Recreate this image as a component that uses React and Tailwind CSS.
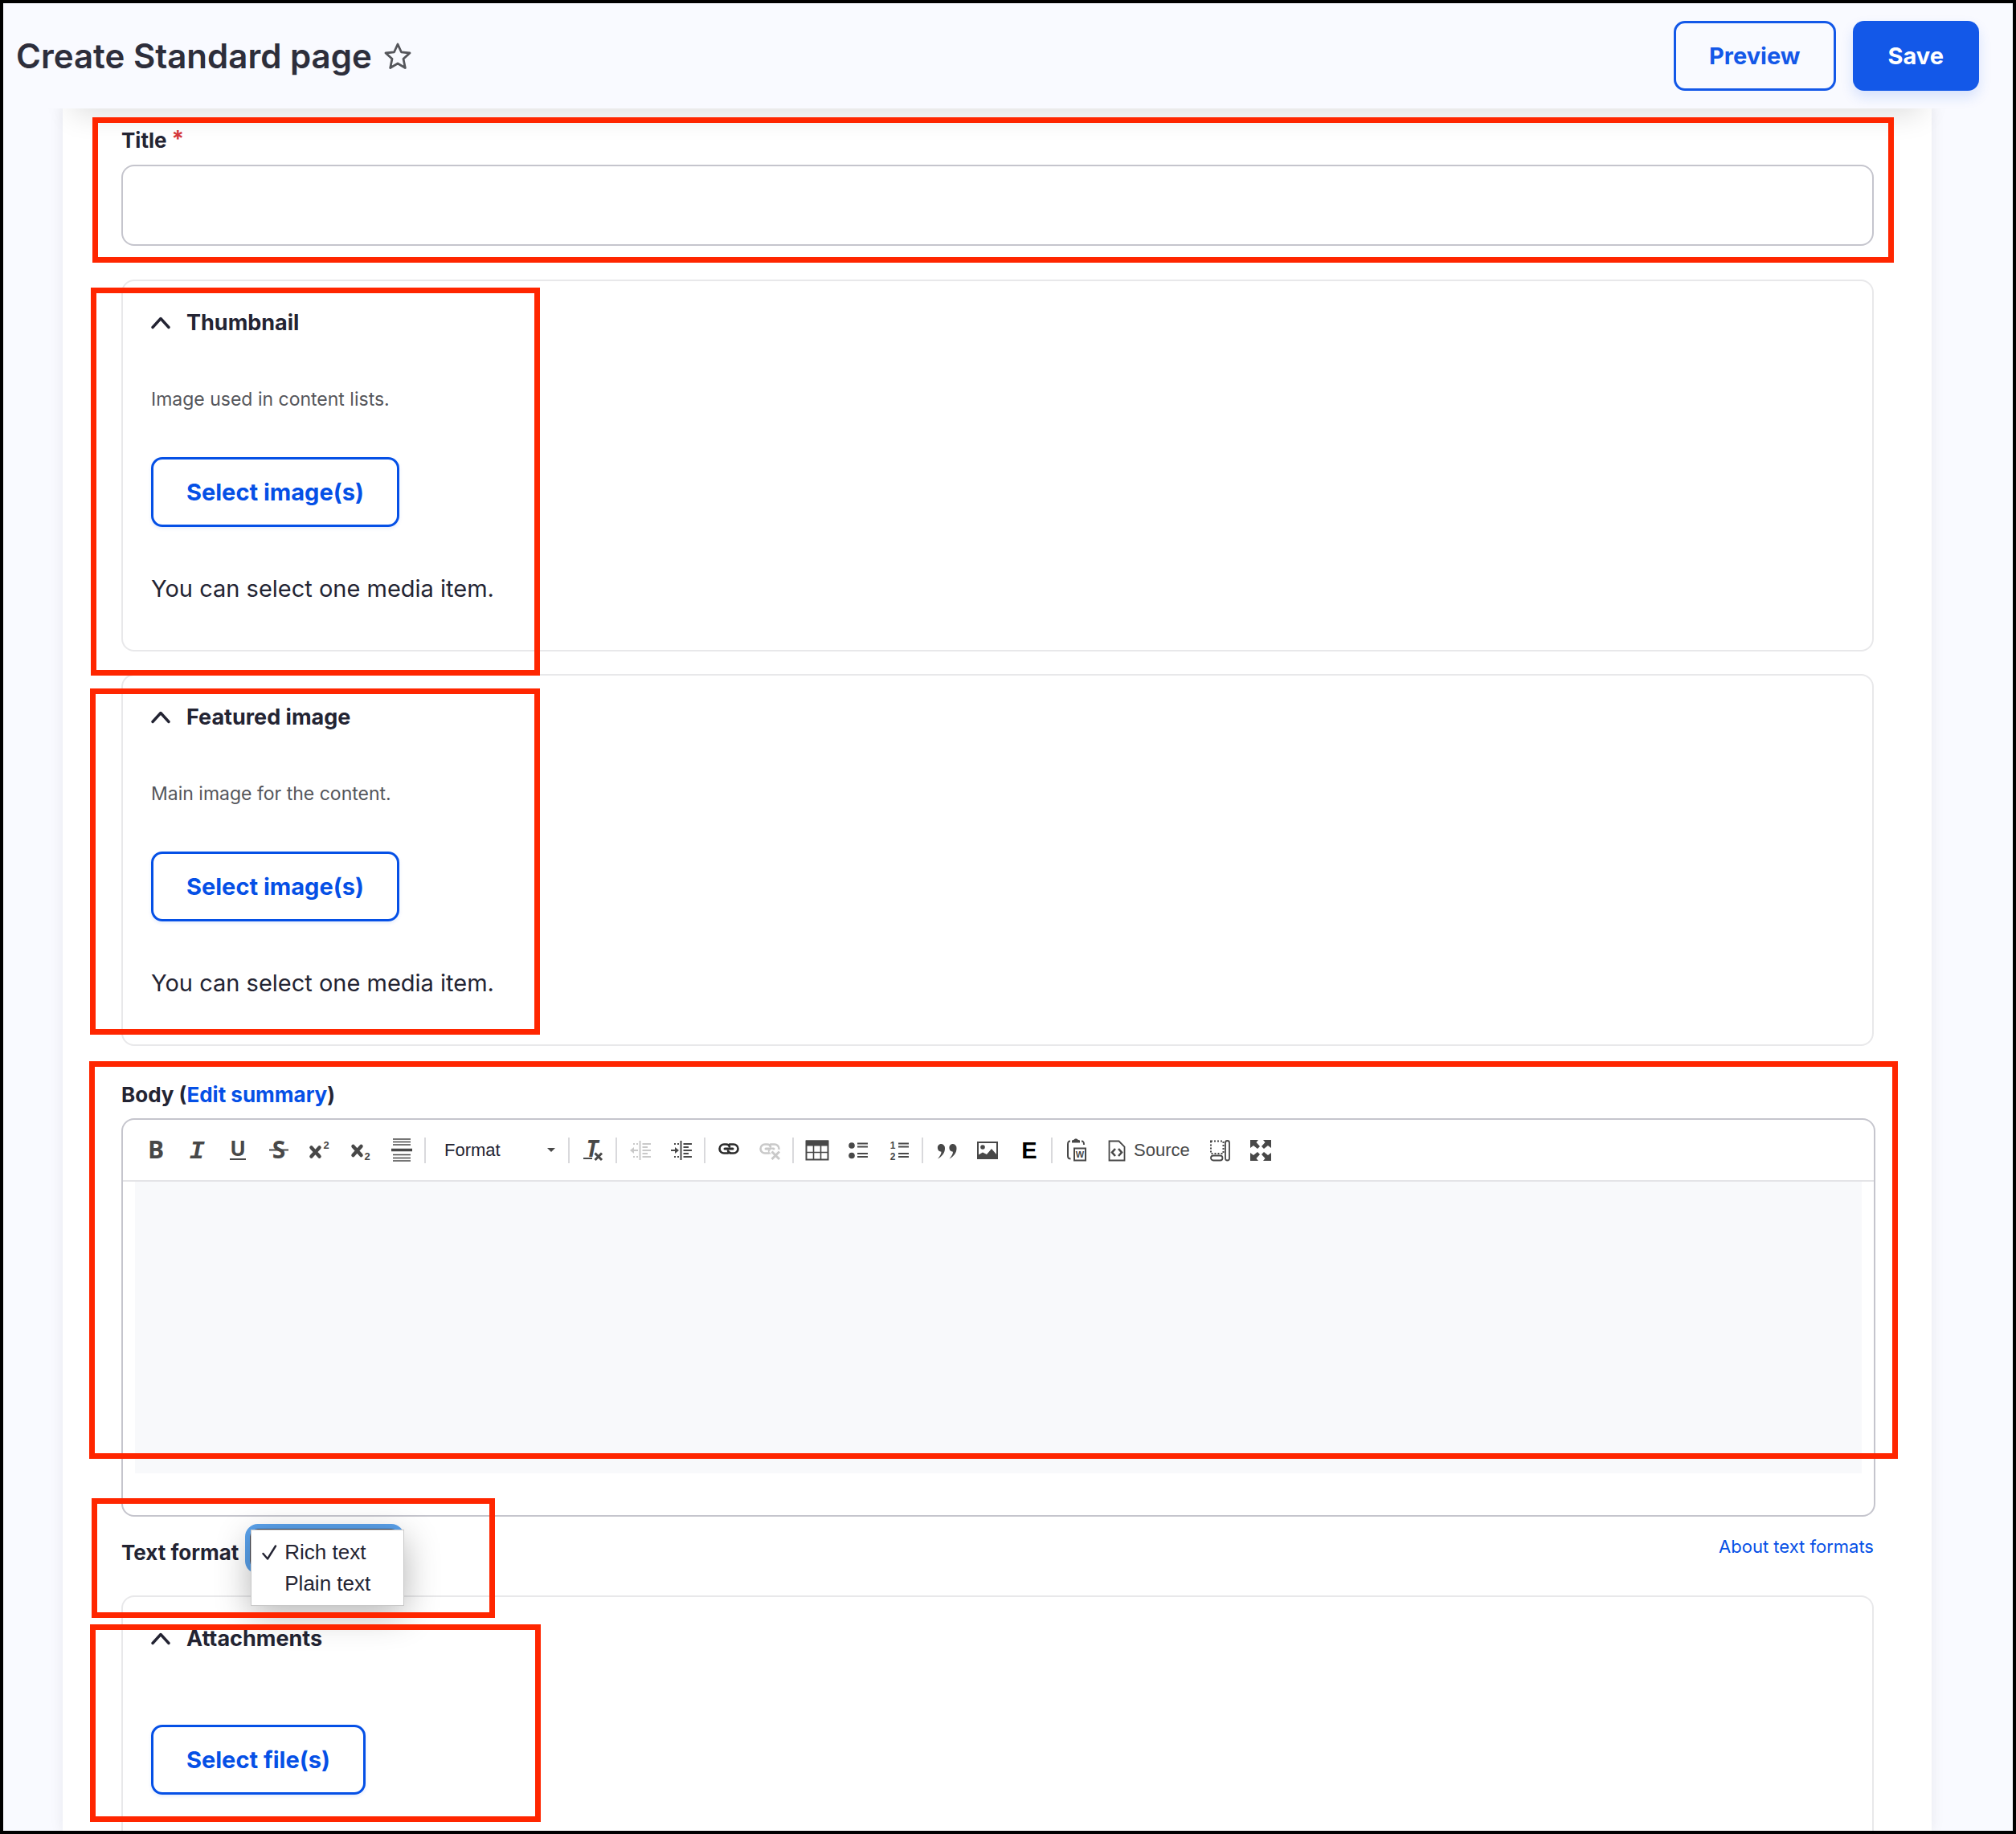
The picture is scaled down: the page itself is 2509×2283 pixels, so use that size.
import React from "react";

const SANS = "font-['Inter',sans-serif]";
const ARIAL = "font-['Liberation_Sans',Arial,sans-serif]";

/* Red annotation frame laid over a section */
function Callout({ className }) {
  return (
    <div
      aria-hidden="true"
      className={`pointer-events-none absolute z-30 border-[7px] border-[#ff2600] ${className}`}
    />
  );
}

function Icon({ children, muted, w = 26, h = 28 }) {
  return (
    <svg
      width={w}
      height={h}
      viewBox={`0 0 ${w} ${h}`}
      fill="none"
      stroke="none"
      className={muted ? "overflow-visible text-[#c9c9c9]" : "overflow-visible text-[#484848]"}
      aria-hidden="true"
    >
      {children}
    </svg>
  );
}

function Glyph({ x, y, size, family = "Open Sans", italic, fill = "currentColor", weight = 700, children }) {
  return (
    <text
      x={x}
      y={y}
      fontSize={size}
      fontFamily={`'${family}', sans-serif`}
      fontWeight={weight}
      fontStyle={italic ? "italic" : "normal"}
      textAnchor="middle"
      fill={fill}
    >
      {children}
    </text>
  );
}

const BoldIcon = () => (
  <Icon>
    <Glyph x={13} y={24} size={30}>B</Glyph>
  </Icon>
);
const ItalicIcon = () => (
  <Icon>
    <Glyph x={13} y={24} size={32} family="Liberation Mono" italic>I</Glyph>
  </Icon>
);
const UnderlineIcon = () => (
  <Icon>
    <Glyph x={13} y={21} size={26}>U</Glyph>
    <path d="M3 25H23" stroke="currentColor" strokeWidth="2" />
  </Icon>
);
const StrikeIcon = () => (
  <Icon>
    <Glyph x={13} y={24} size={30}>S</Glyph>
    <path d="M1 13.500H25" stroke="currentColor" strokeWidth="2" />
  </Icon>
);
const SuperIcon = () => (
  <Icon>
    <path d="M2.500 10.500L12.500 21.500M12.500 10.500L2.500 21.500" stroke="currentColor" strokeWidth="4.500" strokeLinecap="round" />
    <Glyph x={21} y={12} size={13} family="Liberation Sans">2</Glyph>
  </Icon>
);
const SubIcon = () => (
  <Icon>
    <path d="M3.500 9L13.500 20M13.500 9L3.500 20" stroke="currentColor" strokeWidth="4.500" strokeLinecap="round" />
    <Glyph x={21} y={26} size={13} family="Liberation Sans">2</Glyph>
  </Icon>
);
const RuleIcon = () => (
  <Icon w={28} h={32}>
    <path d="M3 2H25M3 5.500H25M3 9H25M3 21.500H25M3 25.500H25M3 29H25" stroke="currentColor" strokeWidth="1.600" />
    <path d="M1 15.500H27" stroke="currentColor" strokeWidth="3.500" />
  </Icon>
);
const RemoveFormatIcon = () => (
  <Icon>
    <Glyph x={12} y={22} size={28} italic>T</Glyph>
    <path d="M1 24H12" stroke="currentColor" strokeWidth="2" />
    <path d="M15.500 17.500L24 26M24 17.500L15.500 26" stroke="currentColor" strokeWidth="3" />
  </Icon>
);
const IndentLines = () => (
  <g stroke="currentColor">
    <path d="M12.500 2V26" strokeWidth="2" />
    <path d="M15.500 6H26M15.500 14H26M15.500 22H26" strokeWidth="2.200" />
    <path d="M15.500 10H22M15.500 18H22" strokeWidth="2" />
    <path d="M4 6H10M4 22H10" strokeWidth="2" strokeDasharray="2 2" />
  </g>
);
const OutdentIcon = () => (
  <Icon muted>
    <IndentLines />
    <path d="M4 14H10" stroke="currentColor" strokeWidth="2" />
    <path d="M0 14L5 10V18Z" fill="currentColor" />
  </Icon>
);
const IndentIcon = () => (
  <Icon>
    <IndentLines />
    <path d="M0 14H6" stroke="currentColor" strokeWidth="2" />
    <path d="M10 14L5 10V18Z" fill="currentColor" />
  </Icon>
);
const ChainLinks = () => (
  <g strokeLinecap="round">
    <path d="M12 17.500H7A5 5 0 0 1 7 6.500H9.500A4.500 4.500 0 0 1 14 9.500M14 6.500H19A5 5 0 0 1 19 17.500H16.500A4.500 4.500 0 0 1 12 14.500" stroke="currentColor" strokeWidth="2.600" />
    <path d="M8 12H18" stroke="currentColor" strokeWidth="3" />
  </g>
);
const LinkIcon = () => (
  <Icon>
    <g className="text-[#2b2b2b]">
      <ChainLinks />
    </g>
  </Icon>
);
const UnlinkIcon = () => (
  <Icon muted>
    <ChainLinks />
    <path d="M14 14L26 26M26 14L14 26" stroke="#fff" strokeWidth="5" />
    <path d="M15.500 15.500L25 25M25 15.500L15.500 25" stroke="currentColor" strokeWidth="3" />
  </Icon>
);
const TableIcon = () => (
  <Icon w={30}>
    <path d="M1.500 2.500H28.500V25.500H1.500Z" stroke="currentColor" strokeWidth="2" />
    <path d="M1 1.500H29V8.500H1Z" fill="currentColor" />
    <path d="M10.500 8V25M19.500 8V25M1 16.500H29" stroke="currentColor" strokeWidth="1.600" />
  </Icon>
);
const ListLines = () => (
  <path d="M12 5.500H25M12 9.500H25M12 18H25M12 22H25" stroke="currentColor" strokeWidth="1.800" />
);
const BulletIcon = () => (
  <Icon>
    <circle cx="5" cy="8" r="3.800" fill="currentColor" />
    <circle cx="5" cy="20.500" r="3.800" fill="currentColor" />
    <ListLines />
  </Icon>
);
const NumberIcon = () => (
  <Icon>
    <Glyph x={5} y={12} size={12} family="Liberation Sans">1</Glyph>
    <Glyph x={5} y={26} size={12} family="Liberation Sans">2</Glyph>
    <ListLines />
  </Icon>
);
const QuoteIcon = () => (
  <Icon>
    <path d="M5.500 6A5 5 0 0 1 11 11.500C11 17.500 7 22 2 24.500C5 21 6.500 18.500 6.500 15.800A5 5 0 0 1 5.500 6Z" fill="currentColor" />
    <path d="M20 6A5 5 0 0 1 25.500 11.500C25.500 17.500 21.500 22 16.500 24.500C19.500 21 21 18.500 21 15.800A5 5 0 0 1 20 6Z" fill="currentColor" />
  </Icon>
);
const ImageIcon = () => (
  <Icon>
    <path d="M1 4H25V24H1Z" stroke="currentColor" strokeWidth="2" />
    <circle cx="7" cy="10" r="2.800" fill="currentColor" />
    <path d="M1 24V20L7 16.500L12 19L18 12L25 20V24Z" fill="currentColor" />
  </Icon>
);
const EmbedIcon = () => (
  <Icon>
    <Glyph x={14} y={24} size={29} family="Liberation Sans" fill="#000">E</Glyph>
  </Icon>
);
const PasteIcon = () => (
  <Icon w={26} h={30}>
    <path d="M6 3.500C3.500 3.500 3 4.500 3 7.500V22C3 24.500 4 25.500 6.500 25.500" stroke="currentColor" strokeWidth="2" />
    <path d="M20 3.500C22.500 3.500 23 4.500 23 8" stroke="currentColor" strokeWidth="2" />
    <path d="M8 5.500V3C8 2 9.500 2 10.500 2C10.500 0 15.500 0 15.500 2C17 2 18 2 18 3V5.500Z" fill="currentColor" />
    <path d="M11 12.500H25V27.500H11Z" stroke="currentColor" strokeWidth="2" />
    <Glyph x={18} y={24} size={11} family="Liberation Sans">W</Glyph>
  </Icon>
);
const SourceIcon = () => (
  <Icon w={22}>
    <path d="M1.500 2.500H13.500L20.500 9.500V26.500H1.500Z" stroke="currentColor" strokeWidth="1.800" />
    <path d="M9 12L5 16.500L9 21M13 12L17 16.500L13 21" stroke="currentColor" strokeWidth="2.600" />
  </Icon>
);
const BlocksIcon = () => (
  <Icon w={26}>
    <path d="M2 2.500H17.500V18H2Z" stroke="currentColor" strokeWidth="2" strokeDasharray="2 2" />
    <rect x="2" y="20.500" width="14.500" height="6" rx="3" stroke="currentColor" strokeWidth="1.800" />
    <rect x="20" y="2" width="5" height="24.500" rx="2.500" stroke="currentColor" strokeWidth="1.800" />
  </Icon>
);
const MaximizeIcon = () => (
  <Icon>
    <path
      d="M0 1H10L7.500 4L12 9L9 12L4 8L0 11ZM26 1H16L18.500 4L14 9L17 12L22 8L26 11ZM0 27H10L7.500 24L12 19L9 16L4 20L0 17ZM26 27H16L18.500 24L14 19L17 16L22 20L26 17Z"
      fill="currentColor"
    />
  </Icon>
);

function Tool({ label, disabled, children }) {
  return (
    <button
      type="button"
      aria-label={label}
      title={label}
      disabled={disabled}
      className="flex h-10 w-[51px] items-center justify-center"
    >
      {children}
    </button>
  );
}

const Separator = () => <span className="mx-[3px] h-8 w-[2px] bg-[#d9d9dc]" />;

function Toolbar() {
  return (
    <div role="toolbar" aria-label="Editor toolbar" className="flex h-[77px] flex-wrap items-center border-b-2 border-[#e4e4e7] pl-[15px]">
      <Tool label="Bold"><BoldIcon /></Tool>
      <Tool label="Italic"><ItalicIcon /></Tool>
      <Tool label="Underline"><UnderlineIcon /></Tool>
      <Tool label="Strikethrough"><StrikeIcon /></Tool>
      <Tool label="Superscript"><SuperIcon /></Tool>
      <Tool label="Subscript"><SubIcon /></Tool>
      <Tool label="Insert horizontal line"><RuleIcon /></Tool>
      <Separator />
      <button
        type="button"
        aria-haspopup="listbox"
        className={`flex h-10 w-[171px] items-center justify-between pr-[13px] pl-5 text-[22px] text-[#232433] ${ARIAL}`}
      >
        Format
        <svg width="10" height="5" viewBox="0 0 10 5" aria-hidden="true">
          <path d="M0 0H10L5 5Z" fill="#484848" />
        </svg>
      </button>
      <Separator />
      <Tool label="Remove format"><RemoveFormatIcon /></Tool>
      <Separator />
      <Tool label="Decrease indent" disabled><OutdentIcon /></Tool>
      <Tool label="Increase indent"><IndentIcon /></Tool>
      <Separator />
      <Tool label="Link"><LinkIcon /></Tool>
      <Tool label="Unlink" disabled><UnlinkIcon /></Tool>
      <Separator />
      <Tool label="Table"><TableIcon /></Tool>
      <Tool label="Bulleted list"><BulletIcon /></Tool>
      <Tool label="Numbered list"><NumberIcon /></Tool>
      <Separator />
      <Tool label="Block quote"><QuoteIcon /></Tool>
      <Tool label="Image"><ImageIcon /></Tool>
      <Tool label="Embed"><EmbedIcon /></Tool>
      <Separator />
      <Tool label="Paste from Word"><PasteIcon /></Tool>
      <button
        type="button"
        className={`flex h-10 items-center gap-[10px] pr-3 pl-[15px] text-[22px] text-[#484848] ${ARIAL}`}
      >
        <SourceIcon />
        Source
      </button>
      <Tool label="Show blocks"><BlocksIcon /></Tool>
      <Tool label="Maximize"><MaximizeIcon /></Tool>
    </div>
  );
}

function OutlineButton({ children }) {
  return (
    <button
      type="button"
      className="h-[87px] rounded-[14px] border-[3px] border-[#0550e6] px-[41px] text-[29px] leading-10 font-bold text-[#0550e6] shadow-[0_2px_4px_rgba(5,80,230,0.1)]"
    >
      {children}
    </button>
  );
}

function Summary({ children }) {
  return (
    <button type="button" aria-expanded="true" className="flex items-center gap-[19px] text-[27px] leading-9 font-bold">
      <svg width="25" height="16" viewBox="0 0 25 16" fill="none" aria-hidden="true">
        <path d="M2 13.500L12 2.500L22 13.500" stroke="#232433" strokeWidth="3.400" strokeLinecap="round" strokeLinejoin="round" />
      </svg>
      {children}
    </button>
  );
}

function MediaPanel({ title, description, className, callout }) {
  return (
    <section className={`relative flex flex-col items-start rounded-2xl border-2 border-[#e8e8ea] px-[35px] pt-[34px] pb-14 ${className}`}>
      <Summary>{title}</Summary>
      <p className="mt-[63px] text-[23px] leading-7 text-[#55565b]">{description}</p>
      <div className="mt-[58px]">
        <OutlineButton>Select image(s)</OutlineButton>
      </div>
      <p className="mt-[57px] text-[29px] leading-10">You can select one media item.</p>
      <Callout className={callout} />
    </section>
  );
}

export default function App() {
  return (
    <div className={`flex min-h-screen flex-col border-4 border-black bg-[#f9faff] text-[#232433] ${SANS}`}>
      <header className="relative z-10 flex h-[131px] items-center justify-between bg-[#f9faff] pr-[42px] pl-4">
        <div className="flex items-center gap-[14px]">
          <h1 className="text-[42px] leading-[52px] font-semibold text-[#2d2e3b]">Create Standard page</h1>
          <button type="button" aria-label="Add to shortcuts">
            <svg width="36" height="36" viewBox="0 0 36 36" fill="none" aria-hidden="true">
              <path
                d="M18 3L22.400 12.800L33 14L25 21.300L27.300 32.500L18 27L8.700 32.500L11 21.300L3 14L13.600 12.800Z"
                stroke="#55565b"
                strokeWidth="2.800"
                strokeLinejoin="round"
              />
            </svg>
          </button>
        </div>
        <div className="flex gap-[21px]">
          <button
            type="button"
            className="h-[87px] rounded-[14px] border-[3px] border-[#1358e8] px-[41px] text-[29px] font-bold text-[#1358e8]"
          >
            Preview
          </button>
          <button
            type="button"
            className="h-[87px] rounded-[14px] bg-[#1358e8] px-11 text-[29px] font-bold text-white shadow-[0_8px_16px_rgba(19,88,232,0.15)]"
          >
            Save
          </button>
        </div>
      </header>

      <main className="relative mr-[101px] ml-[74px] flex grow flex-col bg-white pt-6 pr-[72px] pl-[73px] shadow-[0_0_16px_rgba(0,0,40,0.08)]">
        <div
          aria-hidden="true"
          className="pointer-events-none absolute inset-x-3 -top-10 h-10 shadow-[0_6px_36px_rgba(0,0,0,0.14)]"
        />

        <div className="relative flex flex-col">
          <label htmlFor="title" className="flex gap-[6px] text-[26px] leading-8 font-bold">
            Title
            <span className="text-[28px] leading-7 text-[#d4373b]">*</span>
          </label>
          <input id="title" type="text" required className="mt-[14px] h-[101px] w-full rounded-2xl border-2 border-[#c5c5cd] bg-white px-6 text-[29px]" />
          <Callout className="-top-[13px] -right-[25px] -bottom-[21px] -left-[36px]" />
        </div>

        <MediaPanel
          title="Thumbnail"
          description="Image used in content lists."
          className="mt-[42px]"
          callout="top-[8px] -bottom-[32px] -left-[40px] w-[559px]"
        />
        <MediaPanel
          title="Featured image"
          description="Main image for the content."
          className="mt-7"
          callout="top-[16px] bottom-[12px] -left-[41px] w-[560px]"
        />

        <div className="relative mt-[45px]">
          <label htmlFor="body" className="block text-[26px] leading-8 font-bold">
            Body (<a href="#summary" className="text-[#0550e6]">Edit summary</a>)
          </label>
          <div className="mt-[13px] -mr-[2px] flex flex-col rounded-2xl border-2 border-[#c5c5cd] bg-white">
            <Toolbar />
            <textarea id="body" className="mr-[15px] mb-[52px] ml-[15px] block h-[363px] resize-none bg-[#f8f9fb] p-4 text-[29px] outline-none" />
          </div>
          <Callout className="-top-[26px] -right-[30px] bottom-[72px] -left-[40px]" />
        </div>

        <div className="relative z-20 flex h-[98px] items-start justify-between">
          <div className="flex items-start">
            <label htmlFor="format" className="mt-[29px] text-[26px] leading-8 font-bold">Text format</label>
            <div className="relative mt-[15px] ml-[14px]">
              <select
                id="format"
                defaultValue="rich"
                className={`h-[50px] w-[186px] appearance-none rounded-[10px] border-2 border-[#43444f] bg-white pl-10 text-[26px] shadow-[0_0_0_6px_#5aa2ec] outline-none ${ARIAL}`}
              >
                <option value="rich">Rich text</option>
                <option value="plain">Plain text</option>
              </select>
              <ul
                role="listbox"
                aria-label="Text format options"
                className={`absolute top-[1px] left-[1px] w-[191px] border border-[#c8c8c8] bg-white pt-[8px] pb-[7px] text-[26px] leading-[39px] shadow-[0_10px_44px_rgba(0,0,0,0.3)] ${ARIAL}`}
              >
                <li role="option" aria-selected="true" className="flex items-center">
                  <svg width="19" height="20" viewBox="0 0 19 20" fill="none" className="mr-[9px] ml-[13px]" aria-hidden="true">
                    <path d="M1.500 11L7 17.500L17 1.500" stroke="#232433" strokeWidth="2.400" strokeLinecap="round" strokeLinejoin="round" />
                  </svg>
                  Rich text
                </li>
                <li role="option" aria-selected="false" className="pl-[41px]">Plain text</li>
              </ul>
            </div>
          </div>
          <a href="#formats" className="mt-[23px] text-[22px] leading-7 text-[#0550e6]">About text formats</a>
          <Callout className="-top-[23px] -bottom-[28px] -left-[37px] w-[502px]" />
        </div>

        <section className="relative flex grow flex-col items-start rounded-t-2xl border-2 border-b-0 border-[#e8e8ea] px-[35px] pt-[34px]">
          <Summary>Attachments</Summary>
          <div className="mt-[89px] mb-[45px]">
            <OutlineButton>Select file(s)</OutlineButton>
          </div>
          <Callout className="top-[34px] bottom-[11px] -left-[41px] w-[561px]" />
        </section>
      </main>
    </div>
  );
}
